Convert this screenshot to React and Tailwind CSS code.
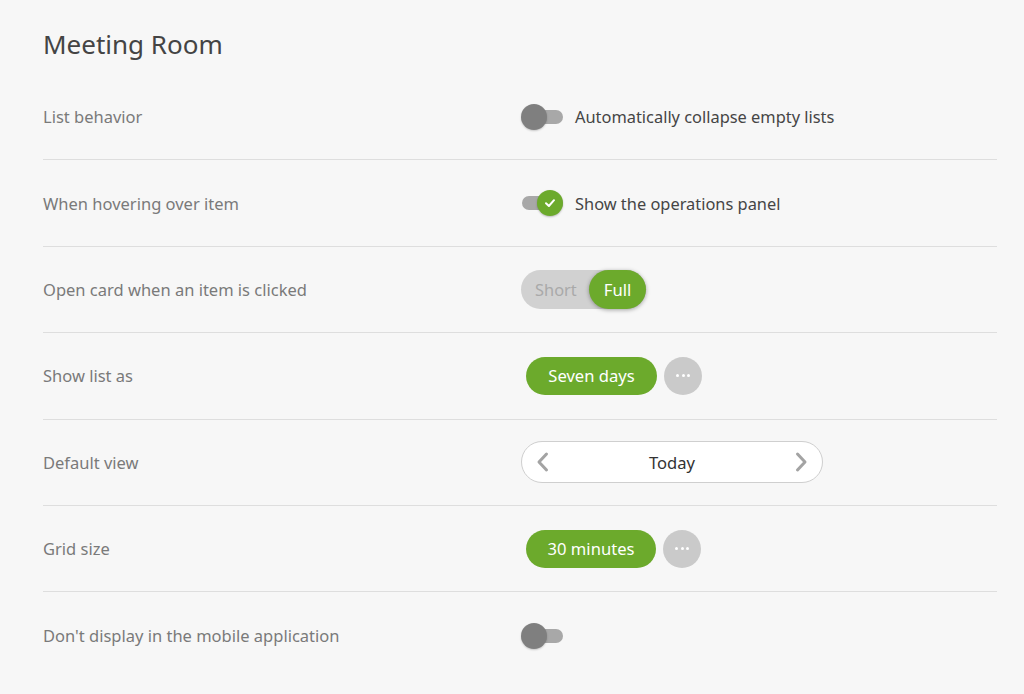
import React from "react";

const font = { fontFamily: '"Noto Sans", "Open Sans", sans-serif' };

function Toggle({ on }) {
  return (
    <div className="relative w-[42px] h-[26px] shrink-0">
      <div className="absolute left-[1px] right-0 top-[6px] h-[14px] rounded-full bg-[#a8a8a8]" />
      {on ? (
        <div className="absolute right-0 top-0 w-[26px] h-[26px] rounded-full bg-[#6caa2c] flex items-center justify-center shadow-[0_1px_2px_rgba(0,0,0,0.25)]">
          <svg width="14" height="14" viewBox="0 0 14 14" fill="none">
            <path d="M3 7.3 L5.9 10 L11 4.2" stroke="white" strokeWidth="2" strokeLinecap="round" strokeLinejoin="round" />
          </svg>
        </div>
      ) : (
        <div className="absolute left-0 top-0 w-[26px] h-[26px] rounded-full bg-[#7f7f7f] shadow-[0_1px_2px_rgba(0,0,0,0.2)]" />
      )}
    </div>
  );
}

function Dots() {
  return (
    <div className="ml-[7px] w-[38px] h-[38px] rounded-full bg-[#cacaca] flex items-center justify-center gap-[2.5px]">
      <span className="w-[3px] h-[3px] rounded-full bg-white" />
      <span className="w-[3px] h-[3px] rounded-full bg-white" />
      <span className="w-[3px] h-[3px] rounded-full bg-white" />
    </div>
  );
}

function Pill({ children, w }) {
  return (
    <div className={`ml-[5px] h-[38px] rounded-full bg-[#6caa2c] text-white text-[16.6px] flex items-center justify-center pt-[2px] ${w}`}>
      {children}
    </div>
  );
}

function Row({ label, children, last }) {
  return (
    <div className={`flex items-center h-[86.4px] ${last ? "" : "border-b border-[#dedede]"}`}>
      <div className="w-[478px] text-[16.5px] text-[#7a7a7a] pt-[2px]">{label}</div>
      <div className="flex items-center">{children}</div>
    </div>
  );
}

export default function App() {
  return (
    <div className="w-[1024px] h-[694px] bg-[#f7f7f7] overflow-hidden pl-[43px] pr-[27px]" style={font}>
      <div className="pt-[14px] h-[74px] flex items-center text-[26px] text-[#444444]">
        Meeting Room
      </div>
      <Row label="List behavior">
        <Toggle on={false} />
        <span className="ml-[12px] text-[16.4px] text-[#454545] pt-[2px]">Automatically collapse empty lists</span>
      </Row>
      <Row label="When hovering over item">
        <Toggle on />
        <span className="ml-[12px] text-[16.4px] text-[#454545] pt-[2px]">Show the operations panel</span>
      </Row>
      <Row label="Open card when an item is clicked">
        <div className="w-[125px] h-[39px] rounded-full bg-[#d1d1d1] flex items-center">
          <span className="pl-[14px] w-[68px] text-[16.4px] text-[#a9a9a9] pt-[2px]">Short</span>
          <div className="w-[57px] h-[39px] rounded-full bg-[#6caa2c] text-white text-[16.6px] flex items-center justify-center pt-[2px] shadow-[0_1px_4px_rgba(0,0,0,0.35)]">
            Full
          </div>
        </div>
      </Row>
      <Row label="Show list as">
        <Pill w="w-[131px]">Seven days</Pill>
        <Dots />
      </Row>
      <Row label="Default view">
        <div className="w-[302px] h-[42px] rounded-full bg-white border border-[#cfcfcf] flex items-center justify-between px-[13px]">
          <svg width="16" height="22" viewBox="0 0 16 22" fill="none">
            <path d="M11.5 3 L4 11 L11.5 19" stroke="#a3a3a3" strokeWidth="3" strokeLinecap="round" strokeLinejoin="round" />
          </svg>
          <span className="text-[16.6px] text-[#333333] pt-[2px]">Today</span>
          <svg width="16" height="22" viewBox="0 0 16 22" fill="none">
            <path d="M4.5 3 L12 11 L4.5 19" stroke="#a3a3a3" strokeWidth="3" strokeLinecap="round" strokeLinejoin="round" />
          </svg>
        </div>
      </Row>
      <Row label="Grid size">
        <Pill w="w-[130px]">30 minutes</Pill>
        <Dots />
      </Row>
      <Row label="Don't display in the mobile application" last>
        <Toggle on={false} />
      </Row>
    </div>
  );
}
